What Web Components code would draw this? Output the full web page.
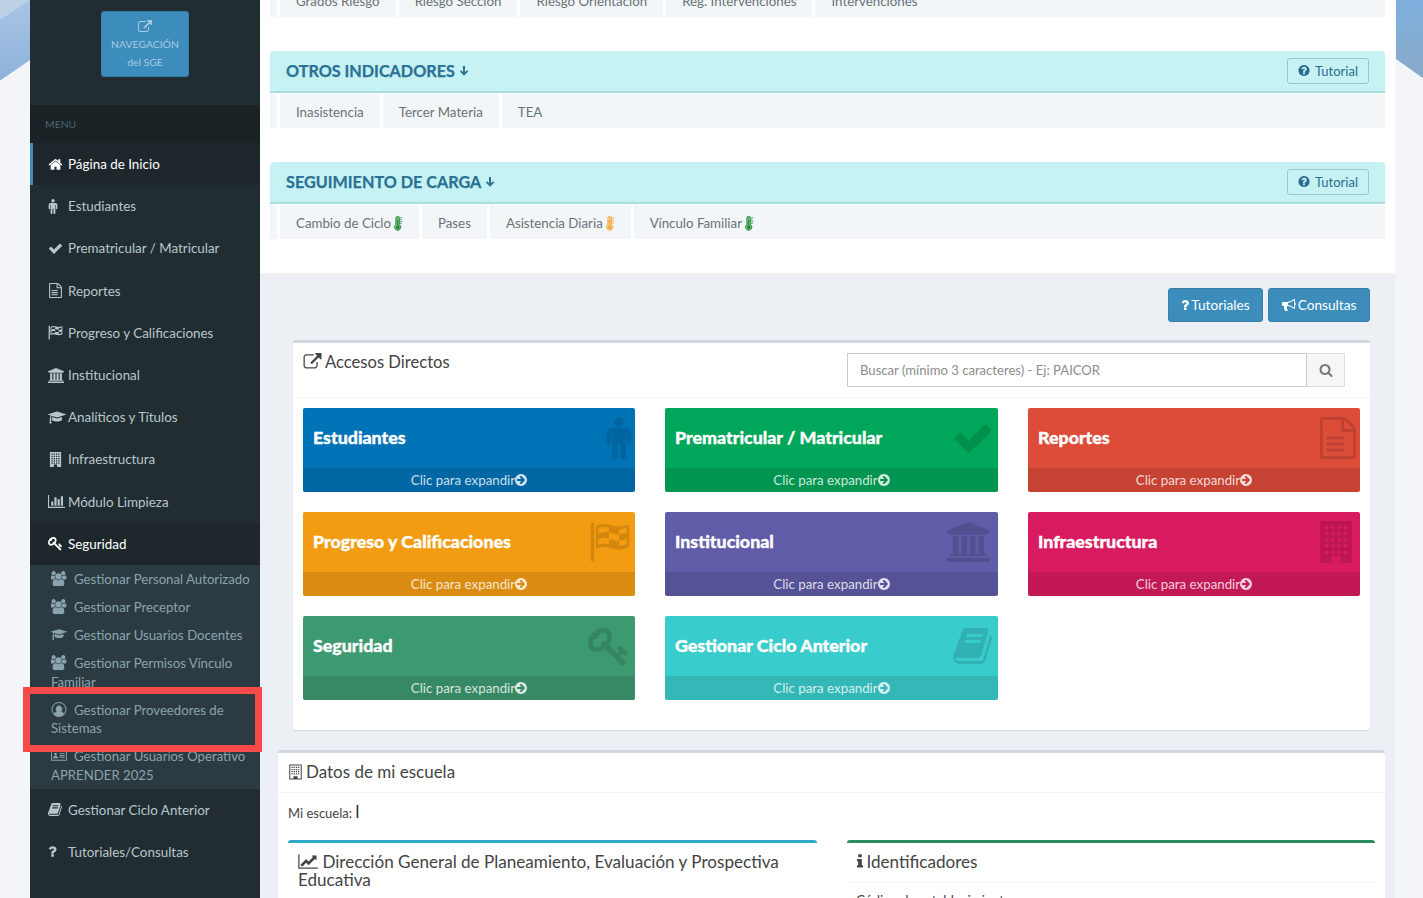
<!DOCTYPE html>
<html lang="es">
<head>
<meta charset="utf-8">
<title>SGE</title>
<style>
  html, body { margin: 0; height: 898px; overflow: hidden; background: #f4f5f8; }
  body { font: 14px/20px Lato, "Noto Sans", sans-serif; color: #333; }
</style>
</head>
<body>
<app-shell>
  <side-bar slot="side">
    <side-item icon="home" active>Página de Inicio</side-item>
    <side-item icon="male">Estudiantes</side-item>
    <side-item icon="check">Prematricular / Matricular</side-item>
    <side-item icon="file">Reportes</side-item>
    <side-item icon="flag">Progreso y Calificaciones</side-item>
    <side-item icon="bank">Institucional</side-item>
    <side-item icon="cap">Analíticos y Títulos</side-item>
    <side-item icon="building">Infraestructura</side-item>
    <side-item icon="bars">Módulo Limpieza</side-item>
    <side-item icon="key" open>Seguridad</side-item>
    <side-sub>
      <sub-item icon="users">Gestionar Personal Autorizado</sub-item>
      <sub-item icon="users">Gestionar Preceptor</sub-item>
      <sub-item icon="cap">Gestionar Usuarios Docentes</sub-item>
      <sub-item icon="users">Gestionar Permisos Vínculo Familiar</sub-item>
      <sub-item icon="usercircle">Gestionar Proveedores de Sistemas</sub-item>
      <sub-item icon="idcard">Gestionar Usuarios Operativo APRENDER 2025</sub-item>
    </side-sub>
    <side-item icon="book">Gestionar Ciclo Anterior</side-item>
    <side-item icon="question">Tutoriales/Consultas</side-item>
  </side-bar>

  <main-top slot="main">
    <tab-strip clipped>
      <strip-tab>Grados Riesgo</strip-tab>
      <strip-tab>Riesgo Sección</strip-tab>
      <strip-tab>Riesgo Orientación</strip-tab>
      <strip-tab>Reg. Intervenciones</strip-tab>
      <strip-tab>Intervenciones</strip-tab>
    </tab-strip>
    <indicator-panel heading="OTROS INDICADORES">
      <strip-tab>Inasistencia</strip-tab>
      <strip-tab>Tercer Materia</strip-tab>
      <strip-tab>TEA</strip-tab>
    </indicator-panel>
    <indicator-panel heading="SEGUIMIENTO DE CARGA">
      <strip-tab temp="green">Cambio de Ciclo</strip-tab>
      <strip-tab>Pases</strip-tab>
      <strip-tab temp="orange">Asistencia Diaria</strip-tab>
      <strip-tab temp="green">Vínculo Familiar</strip-tab>
    </indicator-panel>
  </main-top>

  <main-body slot="main">
    <action-bar>
      <blue-button icon="question">Tutoriales</blue-button>
      <blue-button icon="bullhorn">Consultas</blue-button>
    </action-bar>
    <box-card class="accesos" icon="external" heading="Accesos Directos" search>
      <tile-grid>
        <quick-tile color="#0073b7" icon="male" heading="Estudiantes"></quick-tile>
        <quick-tile color="#00a65a" icon="check" heading="Prematricular / Matricular"></quick-tile>
        <quick-tile color="#dd4b39" icon="file" heading="Reportes"></quick-tile>
        <quick-tile color="#f39c12" icon="flag" heading="Progreso y Calificaciones"></quick-tile>
        <quick-tile color="#605ca8" icon="bank" heading="Institucional"></quick-tile>
        <quick-tile color="#d81b60" icon="building" heading="Infraestructura"></quick-tile>
        <quick-tile color="#3d9970" icon="key" heading="Seguridad"></quick-tile>
        <quick-tile color="#39cccc" icon="book" heading="Gestionar Ciclo Anterior"></quick-tile>
      </tile-grid>
    </box-card>
    <box-card class="datos" icon="buildingo" heading="Datos de mi escuela">
      <school-info></school-info>
    </box-card>
  </main-body>

  <highlight-box slot="over"></highlight-box>
</app-shell>

<script>
// builds the grid path of a building, windows cut out with evenodd
function buildingPath() {
  let d = 'M3 0h18v24H3z';
  for (let y = 2.5; y < 18; y += 3.6) {
    for (let x = 5.6; x < 17; x += 3.6) d += `M${x} ${y}h2v2h-2z`;
  }
  return d + 'M9.5 20h5v4h-5z';
}

const ICONS = {
  home: ['0 0 1792 1792', 'M1472 992v480q0 26-19 45t-45 19h-384v-384h-256v384h-384q-26 0-45-19t-19-45v-480q0-1 .5-3t.5-3l575-474 575 474q1 2 1 6zm223-69l-62 74q-8 9-21 11h-3q-13 0-21-7l-692-577-692 577q-12 8-24 7-13-2-21-11l-62-74q-8-10-7-23.5t11-21.5l719-599q32-26 76-26t76 26l244 204v-195q0-14 9-23t23-9h192q14 0 23 9t9 23v408l219 182q10 8 11 21.5t-7 23.5z'],
  male: ['0 0 16 24', 'M8 0a2.800 2.800 0 1 1 0 5.600A2.800 2.800 0 0 1 8 0zM4 6.300h8c1.700 0 3 1.300 3 3V15c0 1.600-2.400 1.600-2.400 0V9.500h-.8v13c0 2-3 2-3 0v-7H7.200v7c0 2-3 2-3 0v-13h-.8V15c0 1.600-2.400 1.600-2.400 0V9.300c0-1.700 1.300-3 3-3z'],
  check: ['0 0 1792 1792', 'M1671 566q0 40-28 68l-724 724-136 136q-28 28-68 28t-68-28l-136-136-362-362q-28-28-28-68t28-68l136-136q28-28 68-28t68 28l294 295 656-657q28-28 68-28t68 28l136 136q28 28 28 68z'],
  file: ['0 0 1792 1792', 'M1596 380q28 28 48 76t20 88v1152q0 40-28 68t-68 28h-1344q-40 0-68-28t-28-68v-1600q0-40 28-68t68-28h896q40 0 88 20t76 48zm-444-244v376h376q-10-29-22-41l-313-313q-12-12-41-22zm384 1528v-1024h-416q-40 0-68-28t-28-68v-416h-768v1536h1280zm-1128-800q0-14 9-23t23-9h704q14 0 23 9t9 23v64q0 14-9 23t-23 9h-704q-14 0-23-9t-9-23v-64zm736 224q14 0 23 9t9 23v64q0 14-9 23t-23 9h-704q-14 0-23-9t-9-23v-64q0-14 9-23t23-9h704zm0 256q14 0 23 9t9 23v64q0 14-9 23t-23 9h-704q-14 0-23-9t-9-23v-64q0-14 9-23t23-9h704z'],
  flag: ['0 0 24 24', 'M1 1.500a1.100 1.100 0 0 1 2 0V23H1zM4 3c3-1.800 6-1.500 9-.5s6 .8 10-.5v13c-4 1.500-7 1.700-10 .7S7 14.500 4 16zm1.400 1.200v3c2.200-1 4-1.100 6-.7v3.300c-2-.5-3.800-.4-6 .6v3.300c2.200-.9 4-1 6-.5v-2.800c2 .5 3.900 1.100 5.800.9v2.900c1.400-.1 2.900-.4 4.400-1v-3c-1.500.6-3 .9-4.400 1.100V7.600c1.500-.1 2.900-.4 4.400-.9V3.800c-1.500.5-3 .8-4.400.9v2.900c-2-.1-3.900-.7-5.800-1.100V3.700c-2.100-.4-4-.5-6 .5z'],
  bank: ['0 0 1920 1792', 'M960 0l960 384v128h-128q0 26-20.500 45t-48.500 19h-1526q-28 0-48.500-19t-20.500-45h-128v-128zm-704 640h256v768h128v-768h256v768h128v-768h256v768h128v-768h256v768h59q28 0 48.500 19t20.500 45v64h-1664v-64q0-26 20.500-45t48.500-19h59v-768zm1595 960q28 0 48.500 19t20.500 45v128h-1920v-128q0-26 20.500-45t48.500-19h1782z'],
  cap: ['0 0 2304 1792', 'M1774 836l18 316q4 69-82 128t-235 93.500-323 34.500-323-34.500-235-93.500-82-128l18-316 574 181q22 7 48 7t48-7zm530-324q0 23-22 31l-1120 352q-4 1-10 1t-10-1l-652-206q-43 34-71 111.500t-34 178.500q63 36 63 109 0 69-58 107l58 433q2 14-8 25-9 11-24 11h-192q-15 0-24-11-10-11-8-25l58-433q-58-38-58-107 0-73 65-111 11-207 98-330l-333-104q-22-8-22-31t22-31l1120-352q4-1 10-1t10 1l1120 352q22 8 22 31z'],
  building: ['0 0 24 24', buildingPath()],
  buildingo: ['0 0 24 24', 'M2 0h20v24H2zM3.600 1.600v20.800h5v-3.800h6.800v3.800h5V1.600zM5.500 3.500h2v2h-2zM9 3.500h2v2H9zM12.500 3.500h2v2h-2zM16 3.500h2v2h-2zM5.500 7h2v2h-2zM9 7h2v2H9zM12.500 7h2v2h-2zM16 7h2v2h-2zM5.500 10.500h2v2h-2zM9 10.500h2v2H9zM12.500 10.500h2v2h-2zM16 10.500h2v2h-2zM5.500 14h2v2h-2zM9 14h2v2H9zM12.500 14h2v2h-2zM16 14h2v2h-2z'],
  bars: ['0 0 2048 1792', 'M640 896v512h-256v-512h256zm384-512v1024h-256v-1024h256zm1024 1152v128h-2048v-1536h128v1408h1920zm-640-896v768h-256v-768h256zm384-384v1152h-256v-1152h256z'],
  key: ['0 0 1792 1792', 'M832 512q0-80-56-136t-136-56-136 56-56 136q0 42 19 83-41-19-83-19-80 0-136 56t-56 136 56 136 136 56 136-56 56-136q0-42-19-83 41 19 83 19 80 0 136-56t56-136zm851 704q0 17-49 66t-66 49q-9 0-28.500-16t-36.500-33-38.500-40-24.500-26l-96 96 220 220q28 28 28 68 0 42-39 81t-81 39q-40 0-68-28l-671-671q-176 131-365 131-163 0-265.500-102.500t-102.500-265.500q0-160 95-313t248-248 313-95q163 0 265.500 102.500t102.500 265.500q0 189-131 365l355 355 96-96q-3-3-26-24.500t-40-38.500-33-36.500-16-28.500q0-17 49-66t66-49q13 0 23 10 6 6 46 44.500t82 79.500 86.500 86 73 78 28.500 41z'],
  users: ['0 0 1920 1792', 'M529 896q-162 5-265 128h-134q-82 0-138-40.500t-56-118.500q0-353 124-353 6 0 43.500 21t97.500 42.500 119 21.500q67 0 133-23-5 37-5 66 0 139 81 256zm1071 637q0 120-73 189.500t-194 69.500h-874q-121 0-194-69.500t-73-189.500q0-53 3.500-103.500t14-109 26.500-108.500 43-97.500 62-81 85.500-53.500 111.500-20q10 0 43 21.500t73 48 107 48 135 21.500 135-21.500 107-48 73-48 43-21.500q61 0 111.500 20t85.500 53.500 62 81 43 97.500 26.500 108.500 14 109 3.500 103.500zm-1024-1277q0 106-75 181t-181 75-181-75-75-181 75-181 181-75 181 75 75 181zm704 384q0 159-112.500 271.500t-271.500 112.500-271.500-112.500-112.500-271.500 112.500-271.500 271.500-112.500 271.500 112.500 112.500 271.500zm576 225q0 78-56 118.500t-138 40.500h-134q-103-123-265-128 81-117 81-256 0-29-5-66 66 23 133 23 59 0 119-21.500t97.500-42.500 43.500-21q124 0 124 353zm-128-609q0 106-75 181t-181 75-181-75-75-181 75-181 181-75 181 75 75 181z'],
  usercircle: ['0 0 24 24', 'M12 0a12 12 0 1 1 0 24 12 12 0 0 1 0-24zm0 1.800a10.200 10.200 0 0 0-7.800 16.800c1-2.300 3-3.600 4.500-3.900a5 5 0 1 1 6.600 0c1.500.3 3.500 1.600 4.500 3.900A10.200 10.200 0 0 0 12 1.800z'],
  idcard: ['0 0 28 24', 'M1 3h26c.6 0 1 .4 1 1v16c0 .6-.4 1-1 1H1c-.6 0-1-.4-1-1V4c0-.6.4-1 1-1zm.6 1.600v14.800h24.800V4.600zM8 7a2.400 2.400 0 1 1 0 4.800A2.400 2.400 0 0 1 8 7zM3.600 16.800c0-2.600 1.400-4.200 4.400-4.200s4.400 1.600 4.400 4.200zM15 8h9v1.500h-9zM15 11.200h9v1.500h-9zM15 14.400h9v1.500h-9z'],
  book: ['0 0 1792 1792', 'M1639 478q40 57 18 129l-275 906q-19 64-76.500 107.500t-122.500 43.500h-923q-77 0-148.500-53.500t-99.500-131.500q-24-67-2-127 0-4 3-27t4-37q1-8-3-21.500t-3-19.500q2-11 8-21t16.500-23.500 16.500-23.500q23-38 45-91.500t30-91.500q3-10 .5-30t-.5-28q3-11 17-28t17-23q21-36 42-92t25-90q1-9-2.500-32t.5-28q4-13 22-30.500t22-22.500q19-26 42.500-84.500t27.500-96.500q1-8-3-25.500t-2-26.500q2-8 9-18t18-23 17-21q8-12 16.500-30.500t15-35 16-36 19.500-32 26.500-23.500 36-11.500 47.500 5.500l-1 3q38-9 51-9h761q74 0 114 56t18 130l-274 906q-36 119-71.500 153.500t-128.500 34.500h-869q-27 0-38 15-11 16-1 43 24 70 144 70h923q29 0 56-15.500t35-41.500l300-987q7-22 5-57 38 15 59 43zm-1064 2q-4 13 2 22.500t20 9.500h608q13 0 25.500-9.500t16.500-22.500l21-64q4-13-2-22.500t-20-9.500h-608q-13 0-25.500 9.500t-16.500 22.500zm-83 256q-4 13 2 22.500t20 9.500h608q13 0 25.500-9.500t16.500-22.500l21-64q4-13-2-22.500t-20-9.500h-608q-13 0-25.500 9.500t-16.500 22.500z'],
  question: ['0 0 1024 1792', 'M704 1256v240q0 16-12 28t-28 12h-240q-16 0-28-12t-12-28v-240q0-16 12-28t28-12h240q16 0 28 12t12 28zm316-600q0 54-15.500 101t-35 76.500-55 59.500-57.500 43.500-61 35.500q-41 23-68.500 65t-27.500 67q0 17-12 32.500t-28 15.500h-240q-15 0-25.500-18.500t-10.500-37.500v-45q0-83 65-156.500t143-108.500q59-27 84-56t25-76q0-42-46.500-74t-107.500-32q-65 0-108 29-35 25-107 115-13 16-31 16-12 0-25-8l-164-125q-13-10-15.500-25t5.500-28q160-266 464-266 80 0 161 31t146 83 106 127.500 41 158.500z'],
  qcircle: ['0 0 1536 1792', 'M896 1376v-192q0-14-9-23t-23-9h-192q-14 0-23 9t-9 23v192q0 14 9 23t23 9h192q14 0 23-9t9-23zm256-672q0-88-55.500-163t-138.500-116-170-41q-243 0-371 213-15 24 8 42l132 100q7 6 19 6 16 0 25-12 53-68 86-92 34-24 86-24 48 0 85.500 26t37.500 59q0 38-20 61t-68 45q-63 28-115.500 86.500t-52.500 125.500v36q0 14 9 23t23 9h192q14 0 23-9t9-23q0-19 21.500-49.500t54.500-49.500q32-18 49-28.500t46-35 44.500-48 28-60.500 12.500-81zm384 192q0 209-103 385.500t-279.500 279.500-385.500 103-385.500-103-279.500-279.500-103-385.500 103-385.500 279.500-279.500 385.500-103 385.500 103 279.500 279.500 103 385.500z'],
  external: ['0 0 1792 1792', 'M1408 928v320q0 119-84.500 203.500t-203.500 84.500h-832q-119 0-203.500-84.500t-84.500-203.500v-832q0-119 84.500-203.500t203.500-84.500h704q14 0 23 9t9 23v64q0 14-9 23t-23 9h-704q-66 0-113 47t-47 113v832q0 66 47 113t113 47h832q66 0 113-47t47-113v-320q0-14 9-23t23-9h64q14 0 23 9t9 23zm384-864v512q0 26-19 45t-45 19-45-19l-176-176-652 652q-10 10-23 10t-23-10l-114-114q-10-10-10-23t10-23l652-652-176-176q-19-19-19-45t19-45 45-19h512q26 0 45 19t19 45z'],
  search: ['0 0 1792 1792', 'M1216 832q0-185-131.500-316.500t-316.500-131.500-316.500 131.500-131.500 316.500 131.500 316.500 316.500 131.500 316.500-131.500 131.500-316.500zm512 832q0 52-38 90t-90 38q-54 0-90-38l-343-342q-179 124-399 124-143 0-273.500-55.500t-225-150-150-225-55.500-273.500 55.500-273.500 150-225 225-150 273.500-55.500 273.500 55.500 225 150 150 225 55.500 273.500q0 220-124 399l343 343q37 37 37 90z'],
  bullhorn: ['0 0 1792 1792', 'M1664 640q53 0 90.500 37.500t37.500 90.500-37.500 90.500-90.500 37.500v384q0 52-38 90t-90 38q-417-347-812-380-58 19-91 66t-31 100.500 40 92.500q-20 33-23 65.500t6 58 33.500 55 48 50 61.500 50.500q-29 58-111.500 83t-168.500 11.500-132-55.500q-7-23-29.500-87.500t-32-94.500-23-89-15-101 3.500-98.500 22-110.500h-122q-66 0-113-47t-47-113v-192q0-66 47-113t113-47h480q435 0 896-384 52 0 90 38t38 90v384zm-128 604v-954q-394 302-768 343v270q377 42 768 341z'],
  arrowcircle: ['0 0 1536 1792', 'M1285 896q0-27-18-45l-91-91-362-362q-18-18-45-18t-45 18l-91 91q-18 18-18 45t18 45l189 189h-502q-26 0-45 19t-19 45v128q0 26 19 45t45 19h502l-189 189q-19 19-19 45t19 45l91 91q18 18 45 18t45-18l362-362 91-91q18-18 18-45zm251 0q0 209-103 385.500t-279.500 279.500-385.500 103-385.500-103-279.500-279.500-103-385.500 103-385.500 279.500-279.500 385.500-103 385.500 103 279.500 279.500 103 385.500z'],
  linechart: ['0 0 2048 1792', 'M2048 1536v128h-2048v-1536h128v1408h1920zm-128-1248v435q0 21-19.500 29.500t-35.500-7.500l-121-121-633 633q-10 10-23 10t-23-10l-233-233-416 416-192-192 585-585q10-10 23-10t23 10l233 233 464-464-121-121q-16-16-7.500-35.500t29.500-19.500h435q14 0 23 9t9 23z'],
  info: ['0 0 640 1792', 'M640 1344v128q0 26-19 45t-45 19h-512q-26 0-45-19t-19-45v-128q0-26 19-45t45-19h64v-384h-64q-26 0-45-19t-19-45v-128q0-26 19-45t45-19h384q26 0 45 19t19 45v576h64q26 0 45 19t19 45zm-128-1152v192q0 26-19 45t-45 19h-256q-26 0-45-19t-19-45v-192q0-26 19-45t45-19h256q26 0 45 19t19 45z'],
  arrowdown: ['0 0 12 14', 'M4.800 1h2.400v7.600l2.400-2.400 1.500 1.500L6 12.600 1.100 7.700l1.500-1.500 2.200 2.400z']
};

// small inline svg, sized from the css height of the caller
function icon(name, cls) {
  const [box, d] = ICONS[name];
  const rule = name === 'building' || name === 'buildingo' || name === 'flag' ? ' fill-rule="evenodd"' : '';
  return `<svg class="${cls || 'ic'}" viewBox="${box}" fill="currentColor" aria-hidden="true"><path${rule} d="${d}"/></svg>`;
}

function thermometer(color, dark) {
  return `<svg class="temp" viewBox="0 0 14 24" aria-hidden="true">
    <path d="M3.500 3.500a3 3 0 0 1 6 0v10.200a5 5 0 1 1-6 0z" fill="${color}" stroke="${dark}" stroke-width="1.200"/>
    <circle cx="6.500" cy="17.800" r="2.400" fill="${dark}"/>
    <path d="M6.500 6v11" stroke="${dark}" stroke-width="1.500"/>
    <path d="M10.500 3h3.500M10.500 6h2.500M10.500 9h3.500M10.500 12h2.500" stroke="${dark}" stroke-width="1.100"/>
  </svg>`;
}

function comp(tag, css, html) {
  class C extends HTMLElement {
    constructor() {
      super();
      this.attachShadow({ mode: 'open' });
    }
    connectedCallback() {
      this.shadowRoot.innerHTML = `<style>${css}</style>${html(this)}`;
    }
  }
  customElements.define(tag, C);
}

comp('app-shell', `
  :host { display: block; position: relative; height: 898px; overflow: hidden; background: #f4f5f8; }
  .cols { display: grid; grid-template-columns: 230px 1135px; margin-left: 30px; height: 898px; }
  .main { display: flex; flex-direction: column; background: #ecf0f5; min-width: 0; }
  .deco { position: absolute; top: 0; width: 30px; height: 82px; }
  .deco.l { left: 0; }
  .deco.r { left: 1395px; }
`, () => `
  <svg class="deco l" viewBox="0 0 30 82"><defs><linearGradient id="a" x1="0" y1="0" x2="0" y2="1"><stop offset="0" stop-color="#a8c4e4"/><stop offset="1" stop-color="#8db2db"/></linearGradient></defs>
    <path d="M0 0h30v60L1 80H0z" fill="url(#a)"/><path d="M0 0h30L0 20z" fill="#bcd0e6"/></svg>
  <svg class="deco r" viewBox="0 0 28 82"><defs><linearGradient id="b" x1="0" y1="0" x2="0" y2="1"><stop offset="0" stop-color="#7eb0de"/><stop offset="1" stop-color="#8ba9c9"/></linearGradient></defs>
    <path d="M0 0h28v79L0 59z" fill="url(#b)"/></svg>
  <div class="cols">
    <div><slot name="side"></slot></div>
    <div class="main"><slot name="main"></slot></div>
  </div>
  <slot name="over"></slot>
`);

comp('side-bar', `
  :host { display: block; height: 898px; background: #222d32; overflow: hidden; }
  .logo { display: flex; justify-content: center; padding: 11px 0 28px 0; }
  .nav { width: 88px; height: 66px; box-sizing: border-box; border-radius: 3px; background: #3c8dbc; color: #a9cbe0;
    border: 1px solid #367fa9; display: flex; flex-direction: column; align-items: center; padding-top: 8px; font-size: 10.400px; line-height: 18px; }
  .nav svg { width: 14px; height: 14px; margin-bottom: 1px; }
  .head { background: #1a2226; color: #4b646f; font-size: 10.400px; height: 38px; line-height: 38px; padding-left: 15px; }
`, () => `
  <div class="logo"><div class="nav">${icon('external', 'x')}<span>NAVEGACIÓN</span><span>del SGE</span></div></div>
  <div class="head">MENU</div>
  <slot></slot>
`);

comp('side-item', `
  :host { display: flex; align-items: center; height: 42.2px; box-sizing: border-box; padding-left: 18px; color: #b8c7ce; font-size: 13.400px; }
  :host([active]) { background: #1e282c; color: #fff; border-left: 3px solid #3c8dbc; padding-left: 15px; }
  :host([open]) { background: #1e282c; color: #fff; }
  .box { width: 20px; display: flex; align-items: center; flex: none; }
  svg { height: 15px; max-width: 18px; }
`, el => `<span class="box">${icon(el.getAttribute('icon'))}</span><slot></slot>`);

comp('side-sub', `
  :host { display: block; background: #2c3b41; }
`, () => `<slot></slot>`);

comp('sub-item', `
  :host { display: block; padding: 5px 3px 5px 21px; color: #8aa4af; font-size: 13.200px; line-height: 18.2px; }
  .box { display: inline-block; width: 23px; vertical-align: -2px; }
  svg { height: 15px; width: 16px; display: block; }
`, el => `<span class="box">${icon(el.getAttribute('icon'))}</span><slot></slot>`);

comp('highlight-box', `
  :host { position: absolute; left: 23px; top: 687px; width: 239px; height: 65px; box-sizing: border-box; border: 7px solid #f94a4a; }
`, () => ``);

comp('main-top', `
  :host { display: block; background: #fff; height: 273px; padding: 0 10px; box-sizing: border-box; flex: none; overflow: hidden; }
`, () => `<slot></slot>`);

comp('tab-strip', `
  :host { display: flex; height: 34px; background: #f3f6f9; padding-left: 7px; }
  :host([clipped]) { margin-top: -17px; margin-bottom: 34px; }
  .gap { width: 3px; background: #fff; flex: none; }
`, () => `<span class="gap"></span><slot></slot>`);

comp('strip-tab', `
  :host { display: flex; align-items: center; height: 34px; box-sizing: border-box; padding: 2px 16px 0; background: #f3f6f9; color: #6a7278; font-size: 13.300px; border-right: 3px solid #fff; }
  :host(:last-child) { border-right: 0; }
  .temp { height: 15px; width: 10px; margin-left: 2px; }
`, el => {
  const t = el.getAttribute('temp');
  const th = t === 'green' ? thermometer('#6cc070', '#1d7a3a') : t === 'orange' ? thermometer('#f9c98a', '#ee9f33') : '';
  return `<slot></slot>${th}`;
});

comp('indicator-panel', `
  :host { display: block; margin-bottom: 34px; }
  .bar { display: flex; align-items: center; justify-content: space-between; height: 40px; padding: 0 16px; background: #c6f2f3;
    border-bottom: 2px solid #a8dde0; border-radius: 4px 4px 0 0; }
  h3 { margin: 0; font-size: 16.200px; font-weight: 700; color: #2a7195; display: flex; align-items: center; gap: 4px; -webkit-text-stroke: .25px #2a7195; }
  h3 svg { height: 12px; width: 10px; }
  .tut { display: flex; align-items: center; gap: 5px; box-sizing: border-box; height: 26px; width: 82px; justify-content: center; border: 1px solid #93c9cf;
    border-radius: 3px; color: #2a6c90; font-size: 13px; padding-bottom: 1px; }
  .tut svg { height: 13px; width: 12px; }
  tab-strip { margin-top: 1px; }
`, el => `
  <div class="bar">
    <h3>${el.getAttribute('heading')} ${icon('arrowdown')}</h3>
    <span class="tut">${icon('qcircle')}Tutorial</span>
  </div>
  <tab-strip><slot></slot></tab-strip>
`);

comp('main-body', `
  :host { display: block; flex: 1; min-height: 0; padding: 15px 10px 0 18px; box-sizing: border-box; overflow: hidden; }
`, () => `<slot></slot>`);

comp('action-bar', `
  :host { display: flex; justify-content: flex-end; gap: 5px; padding-right: 15px; margin-bottom: 18px; }
`, () => `<slot></slot>`);

comp('blue-button', `
  :host { display: flex; align-items: center; height: 34px; box-sizing: border-box; padding: 0 12.500px; background: #3c8dbc; border: 1px solid #367fa9;
    border-radius: 3px; color: #fff; font-size: 13.700px; gap: 2px; }
  svg { height: 14px; width: auto; }
`, el => `${icon(el.getAttribute('icon'))}<slot></slot>`);

comp('box-card', `
  :host { display: block; background: #fff; border-top: 3px solid #d2d6de; border-radius: 3px; box-shadow: 0 1px 1px rgba(0,0,0,.1); }
  :host(.accesos) { margin: 0 15px 20px 15px; height: 390px; box-sizing: border-box; }
  :host(.datos) { height: 200px; }
  .head { display: flex; justify-content: space-between; padding: 9px 25px 0 10px; border-bottom: 1px solid #f4f4f4; box-sizing: border-box; color: #444; }
  :host(.accesos) .head { height: 55px; }
  :host(.datos) .head { height: 40px; padding-top: 9px; }
  .t { font-size: 16.600px; line-height: 20px; display: flex; align-items: center; gap: 3px; height: 20px; }
  :host(.datos) .t { font-size: 17px; }
  .t svg { height: 18px; width: 19px; }
  :host(.datos) .t svg { width: 15px; }
  .find { display: flex; width: 498px; height: 34px; margin-top: 1px; }
  .inp { flex: 1; box-sizing: border-box; border: 1px solid #ccc; padding: 0 12px; line-height: 32px; color: #8d8d8d; font-size: 13.100px; }
  .btn { width: 38px; box-sizing: border-box; background: #f6f6f6; border: 1px solid #ddd; border-left: 0; display: flex; align-items: center; justify-content: center; color: #777; }
  .btn svg { height: 14px; width: 14px; }
`, el => `
  <div class="head">
    <div class="t">${icon(el.getAttribute('icon'))}${el.getAttribute('heading')}</div>
    ${el.hasAttribute('search') ? `<div class="find"><div class="inp">Buscar (mínimo 3 caracteres) - Ej: PAICOR</div><div class="btn">${icon('search')}</div></div>` : ''}
  </div>
  <slot></slot>
`);

comp('tile-grid', `
  :host { display: grid; grid-template-columns: 332px 333px 332px; column-gap: 30px; row-gap: 20px; padding: 10px 10px 0 10px; }
`, () => `<slot></slot>`);

// right offset of the faded picture differs per icon
const TILE_ICON_RIGHT = { bank: 8, building: 3, book: 3, male: 2, file: 1, key: 5 };

comp('quick-tile', `
  :host { display: block; position: relative; height: 84px; border-radius: 2px; overflow: hidden; color: #fff; }
  .in { height: 60px; display: flex; align-items: center; padding: 0 0 2px 10px; font-size: 17.800px; font-weight: 900; box-sizing: border-box; -webkit-text-stroke: .35px #fff; }
  .foot { height: 24px; background: rgba(0,0,0,.1); display: flex; align-items: center; justify-content: center; color: rgba(255,255,255,.8); font-size: 13.300px; }
  .foot svg { height: 14px; width: 12px; }
  .bg { position: absolute; top: 9px; height: 42px; color: rgba(0,0,0,.13); display: flex; justify-content: flex-end; }
  .bg svg { height: 42px; max-width: 43px; }
`, el => {
  el.style.background = el.getAttribute('color');
  const name = el.getAttribute('icon');
  return `
    <div class="in">${el.getAttribute('heading')}</div>
    <div class="bg" style="right:${TILE_ICON_RIGHT[name] || 4}px">${icon(name)}</div>
    <div class="foot">Clic para expandir${icon('arrowcircle')}</div>
  `;
});

comp('school-info', `
  :host { display: block; padding: 8px 10px; color: #444; }
  .who { font-size: 13px; line-height: 20px; margin-bottom: 17px; }
  .who b { font-weight: 400; font-size: 18px; color: #333; }
  .two { display: grid; grid-template-columns: 529px 528px; gap: 30px; }
  .sub { border-top: 3px solid #2ea9c5; border-radius: 3px; padding: 10px; font-size: 17.100px; line-height: 18px; height: 100px; box-shadow: 0 1px 1px rgba(0,0,0,.06); }
  .sub.g { border-top-color: #2d8b61; padding: 10px 9px; }
  .sub svg { height: 17px; width: 20px; vertical-align: -2px; }
  .sub.g svg { width: 8px; margin-right: -2px; }
  .line { border-top: 1px solid #f4f4f4; margin: 11px -9px 0; padding: 8px 9px; font-size: 13.400px; }
`, () => `
  <div class="who">Mi escuela: <b>l</b></div>
  <div class="two">
    <div class="sub">${icon('linechart')} Dirección General de Planeamiento, Evaluación y Prospectiva Educativa</div>
    <div class="sub g">${icon('info')} Identificadores<div class="line">Código de establecimiento</div></div>
  </div>
`);
</script>
</body>
</html>
